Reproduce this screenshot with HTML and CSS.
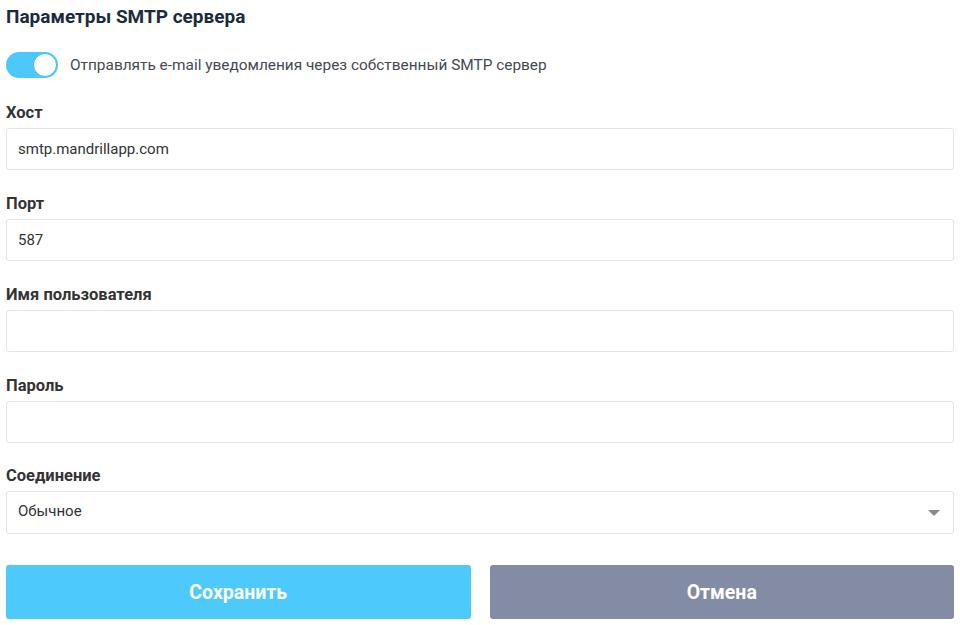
FILE: index.html
```html
<!DOCTYPE html>
<html lang="ru">
<head>
<meta charset="utf-8">
<title>Параметры SMTP сервера</title>
<link rel="stylesheet" href="styles.css">
</head>
<body>
<div class="page">
  <h1 class="title">Параметры SMTP сервера</h1>
  <div class="toggle-row">
    <span class="switch"><span class="knob"></span></span>
    <span class="toggle-text">Отправлять e-mail уведомления через собственный SMTP сервер</span>
  </div>
  <div class="field">
    <div class="label">Хост</div>
    <div class="input">smtp.mandrillapp.com</div>
  </div>
  <div class="field">
    <div class="label">Порт</div>
    <div class="input">587</div>
  </div>
  <div class="field">
    <div class="label">Имя пользователя</div>
    <div class="input"></div>
  </div>
  <div class="field">
    <div class="label">Пароль</div>
    <div class="input"></div>
  </div>
  <div class="field field-last">
    <div class="label">Соединение</div>
    <div class="input select">Обычное<span class="caret"></span></div>
  </div>
  <div class="buttons">
    <div class="btn save">Сохранить</div>
    <div class="btn cancel">Отмена</div>
  </div>
</div>
</body>
</html>
```
FILE: styles.css
```css
html, body {
  margin: 0;
  padding: 0;
  background: #ffffff;
}
body {
  font-family: Roboto, "Liberation Sans", sans-serif;
}
.page {
  width: 948px;
  padding: 4px 6px 0 6px;
}
.title {
  margin: 0;
  font-size: 19px;
  line-height: 26px;
  font-weight: 700;
  color: #1c2b3a;
}
.toggle-row {
  display: flex;
  align-items: center;
  gap: 12px;
  margin-top: 22px;
  height: 26px;
}
.switch {
  position: relative;
  width: 52px;
  height: 26px;
  border-radius: 13px;
  background: #4ec7fb;
  flex: none;
}
.knob {
  position: absolute;
  right: 1px;
  top: 1px;
  width: 22px;
  height: 22px;
  border-radius: 50%;
  background: #ffffff;
  border: 1px solid #3fb8ee;
}
.toggle-text {
  font-size: 15.4px;
  color: #444a52;
}
.field {
  margin-top: 25px;
}
.field + .field {
  margin-top: 24px;
}
.field + .field-last {
  margin-top: 23px;
}
.label {
  font-size: 16.5px;
  line-height: 20px;
  font-weight: 700;
  color: #333333;
  margin-bottom: 5px;
}
.input {
  box-sizing: border-box;
  height: 42px;
  border: 1px solid #e4e4e4;
  border-radius: 3px;
  padding: 0 11px;
  display: flex;
  align-items: center;
  font-size: 15px;
  color: #333333;
}
.select {
  height: 43px;
  justify-content: space-between;
  padding-right: 13px;
  padding-bottom: 3px;
}
.caret {
  width: 0;
  height: 0;
  border-left: 6px solid transparent;
  border-right: 6px solid transparent;
  border-top: 6px solid #8a8a8a;
  margin-top: 3px;
}
.buttons {
  display: flex;
  gap: 19px;
  margin-top: 31px;
}
.btn {
  flex: 1;
  height: 54px;
  border-radius: 3px;
  display: flex;
  align-items: center;
  justify-content: center;
  font-size: 19.5px;
  font-weight: 700;
  color: #ffffff;
}
.save {
  background: #4dc9fc;
}
.cancel {
  background: #838ca4;
}
```
